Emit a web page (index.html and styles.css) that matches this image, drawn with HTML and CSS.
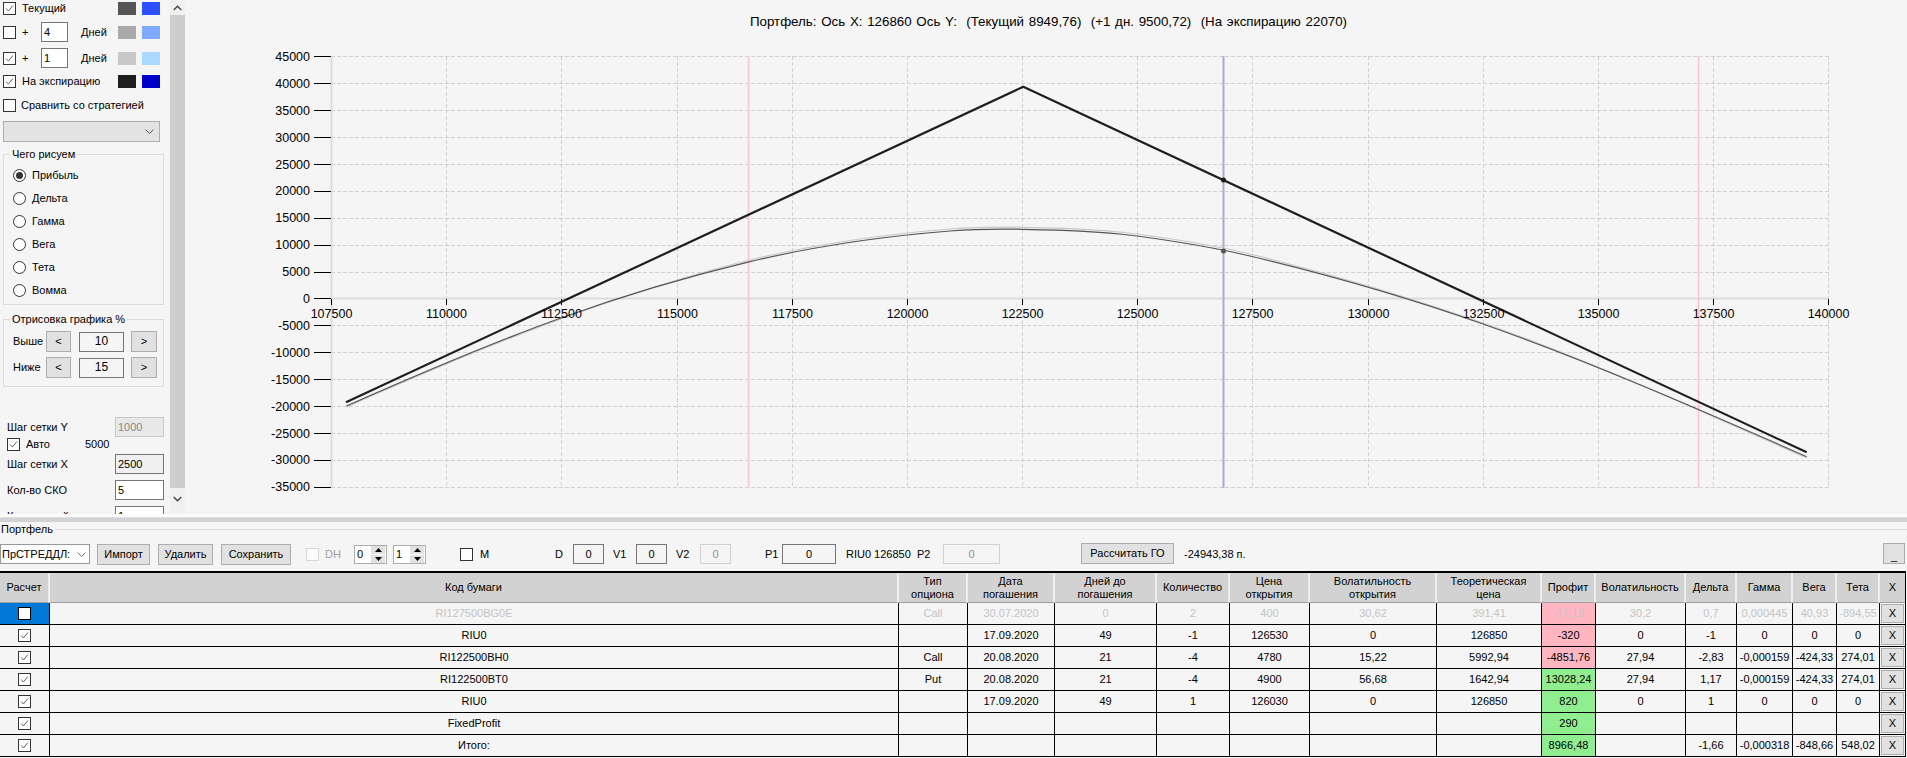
FILE: index.html
```html
<!DOCTYPE html>
<html lang="ru">
<head>
<meta charset="utf-8">
<title>Портфель</title>
<link rel="stylesheet" href="styles.css">
</head>
<body>
<svg class="defs" aria-hidden="true">
  <symbol id="tick" viewBox="0 0 13 13"><path d="M2.5 6.5 5.2 9.5 10.5 3" fill="none" stroke="#555" stroke-width="1.1"/></symbol>
</svg>
<div class="top">
  <aside class="side">
    <div class="side-in">
      <div class="row r1"><span class="cb"><svg><use href="#tick"/></svg></span><span class="lbl">Текущий</span><span class="sw s1"></span><span class="sw s2"></span></div>
      <div class="row r2"><span class="cb"></span><span class="plus">+</span><input class="inp days" value="4"><span class="dn">Дней</span><span class="sw s3"></span><span class="sw s4"></span></div>
      <div class="row r3"><span class="cb"><svg><use href="#tick"/></svg></span><span class="plus">+</span><input class="inp days" value="1"><span class="dn">Дней</span><span class="sw s5"></span><span class="sw s6"></span></div>
      <div class="row r4"><span class="cb"><svg><use href="#tick"/></svg></span><span class="lbl">На экспирацию</span><span class="sw s7"></span><span class="sw s8"></span></div>
      <div class="row r5"><span class="cb"></span><span class="lbl">Сравнить со стратегией</span></div>
      <div class="combo wide"><svg class="chev" viewBox="0 0 9 5"><path d="M.5.5 4.5 4.5 8.5.5" fill="none" stroke="#555"/></svg></div>
      <fieldset class="grp g1">
        <legend>Чего рисуем</legend>
        <div class="rad"><span class="dot on"></span>Прибыль</div>
        <div class="rad"><span class="dot"></span>Дельта</div>
        <div class="rad"><span class="dot"></span>Гамма</div>
        <div class="rad"><span class="dot"></span>Вега</div>
        <div class="rad"><span class="dot"></span>Тета</div>
        <div class="rad"><span class="dot"></span>Вомма</div>
      </fieldset>
      <fieldset class="grp g2">
        <legend>Отрисовка графика %</legend>
        <div class="pct"><span class="pl">Выше</span><span class="btn pb1">&lt;</span><span class="pv">10</span><span class="btn pb2">&gt;</span></div>
        <div class="pct pct2"><span class="pl">Ниже</span><span class="btn pb1">&lt;</span><span class="pv">15</span><span class="btn pb2">&gt;</span></div>
      </fieldset>
      <div class="set s-y"><span>Шаг сетки Y</span><input class="inp num off" value="1000"></div>
      <div class="auto"><span class="cb"><svg><use href="#tick"/></svg></span><span class="alb">Авто</span><span>5000</span></div>
      <div class="set s-x"><span>Шаг сетки X</span><input class="inp num gray" value="2500"></div>
      <div class="set s-n"><span>Кол-во СКО</span><input class="inp num" value="5"></div>
      <div class="set s-n"><span>Кол-во дней</span><input class="inp num" value="1"></div>
    </div>
    <div class="sbar">
      <div class="sbtn"><svg viewBox="0 0 9 6"><path d="M.7 5 4.5 1.2 8.3 5" fill="none" stroke="#444" stroke-width="1.4"/></svg></div>
      <div class="thumb"></div>
      <div class="sbtn sbot"><svg viewBox="0 0 9 6"><path d="M.7 1 4.5 4.8 8.3 1" fill="none" stroke="#444" stroke-width="1.4"/></svg></div>
    </div>
  </aside>
  <main class="chart">
    <div class="ctitle">Портфель: Ось X: 126860 Ось Y:&nbsp; (Текущий 8949,76)&nbsp; (+1 дн. 9500,72)&nbsp; (На экспирацию 22070)</div>
    <svg class="plot" viewBox="190 44 1717 470">
      <path class="grid" d="M331 56.5H1829M331 83.5H1829M331 110.5H1829M331 137.5H1829M331 164.5H1829M331 191.5H1829M331 218.5H1829M331 245.5H1829M331 272.5H1829M331 325.5H1829M331 352.5H1829M331 379.5H1829M331 406.5H1829M331 433.5H1829M331 460.5H1829M331 487.5H1829"/>
      <path class="grid" d="M446.5 56V488M561.5 56V488M677.5 56V488M792.5 56V488M907.5 56V488M1022.5 56V488M1137.5 56V488M1252.5 56V488M1368.5 56V488M1483.5 56V488M1598.5 56V488M1713.5 56V488M1828.5 56V488"/>
      <path class="axis" d="M331.5 56V488M331 298.5H1829"/>
      <path class="ticks" d="M314 56.5H331M314 83.5H331M314 110.5H331M314 137.5H331M314 164.5H331M314 191.5H331M314 218.5H331M314 245.5H331M314 272.5H331M314 298.5H331M314 325.5H331M314 352.5H331M314 379.5H331M314 406.5H331M314 433.5H331M314 460.5H331M314 487.5H331"/>
      <path class="ticks" d="M331.5 299V305M446.5 299V305M561.5 299V305M677.5 299V305M792.5 299V305M907.5 299V305M1022.5 299V305M1137.5 299V305M1252.5 299V305M1368.5 299V305M1483.5 299V305M1598.5 299V305M1713.5 299V305M1828.5 299V305"/>
      <path class="sd" d="M748.5 56V488M1698.5 56V488"/>
      <path class="cursor" d="M1223.5 56V488"/>
      <path class="day1" d="M346.5 407C418 375.5 489.5 344.6 561 319C624 296 687 275.5 750 260C816.7 244 883.3 234.3 950 229C974.3 227.1 998.7 226.8 1023 227.3C1061 228.1 1099 228.9 1137 234C1175.3 239.2 1213.7 245 1252 254.5C1329 273.5 1406 296 1483 323C1590.9 361 1698.8 410.5 1806.7 458"/>
      <path class="cur" d="M346.5 406C418 374.5 489.5 343.6 561 318C624 295.4 687 276.8 750 261.7C816.7 245.7 883.3 236.3 950 231C974.3 229.1 998.7 228.8 1023 229.3C1061 230.1 1099 230.9 1137 236C1175.3 241.2 1213.7 247.3 1252 256.5C1329 275 1406 296.9 1483 324C1590.9 362 1698.8 409.2 1806.7 456.7"/>
      <polyline class="exp" points="346,402.3 1023.3,86.7 1806.7,452.3"/>
      <circle class="pt1" cx="1223.5" cy="180" r="2.5"/>
      <circle class="pt2" cx="1223.5" cy="251" r="2.5"/>
      <g class="yl">
        <text x="310" y="60.5">45000</text><text x="310" y="87.5">40000</text><text x="310" y="114.5">35000</text><text x="310" y="141.5">30000</text><text x="310" y="168.5">25000</text><text x="310" y="194.5">20000</text><text x="310" y="221.5">15000</text><text x="310" y="248.5">10000</text><text x="310" y="275.5">5000</text><text x="310" y="302.5">0</text><text x="310" y="329.5">-5000</text><text x="310" y="356.5">-10000</text><text x="310" y="383.5">-15000</text><text x="310" y="410.5">-20000</text><text x="310" y="437.5">-25000</text><text x="310" y="464">-30000</text><text x="310" y="491">-35000</text>
      </g>
      <g class="xl">
        <text x="331.5" y="317.5">107500</text><text x="446.5" y="317.5">110000</text><text x="561.5" y="317.5">112500</text><text x="677.5" y="317.5">115000</text><text x="792.5" y="317.5">117500</text><text x="907.5" y="317.5">120000</text><text x="1022.5" y="317.5">122500</text><text x="1137.5" y="317.5">125000</text><text x="1252.5" y="317.5">127500</text><text x="1368.5" y="317.5">130000</text><text x="1483.5" y="317.5">132500</text><text x="1598.5" y="317.5">135000</text><text x="1713.5" y="317.5">137500</text><text x="1828.5" y="317.5">140000</text>
      </g>
    </svg>
  </main>
</div>
<div class="split"></div>
<section class="port">
  <div class="phead"><span>Портфель</span><i></i></div>
  <div class="bar">
    <div class="combo pf"><span>ПрСТРЕДДЛ:</span><svg class="chev" viewBox="0 0 9 5"><path d="M.5.5 4.5 4.5 8.5.5" fill="none" stroke="#777"/></svg></div>
    <span class="btn b-imp">Импорт</span>
    <span class="btn b-del">Удалить</span>
    <span class="btn b-sav">Сохранить</span>
    <span class="cb cb-dh"></span>
    <span class="t t-dh">DH</span>
    <div class="spin sp1"><span>0</span><div class="arr"><b><svg viewBox="0 0 7 4"><path d="M3.5 0 7 4H0z"/></svg></b><b><svg viewBox="0 0 7 4"><path d="M0 0H7L3.5 4z"/></svg></b></div></div>
    <div class="spin sp2"><span>1</span><div class="arr"><b><svg viewBox="0 0 7 4"><path d="M3.5 0 7 4H0z"/></svg></b><b><svg viewBox="0 0 7 4"><path d="M0 0H7L3.5 4z"/></svg></b></div></div>
    <span class="cb cb-m"></span>
    <span class="t t-m">M</span>
    <span class="t t-d">D</span>
    <span class="box bx-d">0</span>
    <span class="t t-v1">V1</span>
    <span class="box bx-v1">0</span>
    <span class="t t-v2">V2</span>
    <span class="box bx-v2 dis">0</span>
    <span class="t t-p1">P1</span>
    <span class="box bx-p1">0</span>
    <span class="t t-ri">RIU0 126850</span>
    <span class="t t-p2">P2</span>
    <span class="box bx-p2 dis">0</span>
    <span class="btn b-go">Рассчитать ГО</span>
    <span class="t t-go">-24943,38 п.</span>
    <span class="btn b-min">_</span>
  </div>
  <table class="grid-t">
    <colgroup><col class="c1"><col class="c2"><col class="c3"><col class="c4"><col class="c5"><col class="c6"><col class="c7"><col class="c8"><col class="c9"><col class="c10"><col class="c11"><col class="c12"><col class="c13"><col class="c14"><col class="c15"><col class="c16"></colgroup>
    <thead>
      <tr><th>Расчет</th><th>Код бумаги</th><th>Тип<br>опциона</th><th>Дата<br>погашения</th><th>Дней до<br>погашения</th><th>Количество</th><th>Цена<br>открытия</th><th>Волатильность<br>открытия</th><th>Теоретическая<br>цена</th><th>Профит</th><th>Волатильность</th><th>Дельта</th><th>Гамма</th><th>Вега</th><th>Тета</th><th>X</th></tr>
    </thead>
    <tbody>
      <tr class="dim"><td class="sel"><span class="cb wh"></span></td><td>RI127500BG0E</td><td>Call</td><td>30.07.2020</td><td>0</td><td>2</td><td>400</td><td>30,62</td><td>391,41</td><td class="loss">-17,18</td><td>30,2</td><td>0,7</td><td>0,000445</td><td>40,93</td><td>-894,55</td><td class="xc"><span class="xb">X</span></td></tr>
      <tr><td><span class="cb"><svg><use href="#tick"/></svg></span></td><td>RIU0</td><td></td><td>17.09.2020</td><td>49</td><td>-1</td><td>126530</td><td>0</td><td>126850</td><td class="loss">-320</td><td>0</td><td>-1</td><td>0</td><td>0</td><td>0</td><td class="xc"><span class="xb">X</span></td></tr>
      <tr><td><span class="cb"><svg><use href="#tick"/></svg></span></td><td>RI122500BH0</td><td>Call</td><td>20.08.2020</td><td>21</td><td>-4</td><td>4780</td><td>15,22</td><td>5992,94</td><td class="loss">-4851,76</td><td>27,94</td><td>-2,83</td><td>-0,000159</td><td>-424,33</td><td>274,01</td><td class="xc"><span class="xb">X</span></td></tr>
      <tr><td><span class="cb"><svg><use href="#tick"/></svg></span></td><td>RI122500BT0</td><td>Put</td><td>20.08.2020</td><td>21</td><td>-4</td><td>4900</td><td>56,68</td><td>1642,94</td><td class="gain">13028,24</td><td>27,94</td><td>1,17</td><td>-0,000159</td><td>-424,33</td><td>274,01</td><td class="xc"><span class="xb">X</span></td></tr>
      <tr><td><span class="cb"><svg><use href="#tick"/></svg></span></td><td>RIU0</td><td></td><td>17.09.2020</td><td>49</td><td>1</td><td>126030</td><td>0</td><td>126850</td><td class="gain">820</td><td>0</td><td>1</td><td>0</td><td>0</td><td>0</td><td class="xc"><span class="xb">X</span></td></tr>
      <tr><td><span class="cb"><svg><use href="#tick"/></svg></span></td><td>FixedProfit</td><td></td><td></td><td></td><td></td><td></td><td></td><td></td><td class="gain">290</td><td></td><td></td><td></td><td></td><td></td><td class="xc"><span class="xb">X</span></td></tr>
      <tr><td><span class="cb"><svg><use href="#tick"/></svg></span></td><td>Итого:</td><td></td><td></td><td></td><td></td><td></td><td></td><td></td><td class="gain">8966,48</td><td></td><td>-1,66</td><td>-0,000318</td><td>-848,66</td><td>548,02</td><td class="xc"><span class="xb">X</span></td></tr>
    </tbody>
  </table>
</section>
</body>
</html>
```
FILE: styles.css
```css
*{box-sizing:border-box}
html,body{margin:0;height:758px;overflow:hidden}
body{background:#f5f5f5;color:#000;font:11px/13px "Liberation Sans",Arial,sans-serif}
.defs{display:none}

/* top area */
.top{display:flex;height:514px}
.side{display:flex;width:190px;height:514px;overflow:hidden;flex:none}
.side-in{width:170px;flex:none}
.sbar{width:15px;flex:none;display:flex;flex-direction:column;background:#f0f0f0}
.sbtn{height:15px;display:flex;align-items:center;justify-content:center}
.sbtn svg{width:9px;height:6px}
.thumb{height:473px;background:#cdcdcd}
.sbot{margin-top:auto;height:26px;padding-top:8px;align-items:flex-start}

.row{display:flex;align-items:center;width:160px;padding-left:3px}
.r1{height:17px}
.r2{height:20px;margin-top:5px}
.r3{height:20px;margin-top:6px}
.r4{height:14px;margin-top:6px}
.r5{height:13px;margin-top:11px}
.cb{display:block;flex:none;width:13px;height:13px;border:1px solid #333;background:#fff}
.cb svg{display:block;width:11px;height:11px}
.lbl{margin-left:6px;white-space:nowrap}
.r5 .lbl{margin-left:5px}
.plus{margin-left:6px;width:19px}
.inp{font:inherit;color:#000;border:1px solid #767676;background:#fff;padding:0 2px;margin:0;border-radius:0;outline:0;display:block}
.days{width:27px;height:20px}
.dn{margin-left:13px}
.sw{width:18px;height:13px;flex:none}
.sw:nth-last-child(2){margin-left:auto}
.sw:last-child{margin-left:6px}
.s1{background:#555}.s2{background:#2b50ff}.s3{background:#a9a9a9}.s4{background:#7faaff}
.s5{background:#c8c8c8}.s6{background:#aad8ff}.s7{background:#1e1e1e}.s8{background:#0000c8}

.combo{background:#e3e3e3;border:1px solid #adadad;display:flex;align-items:center;justify-content:flex-end}
.wide{width:157px;height:21px;margin:9px 0 0 3px;padding-right:5px}
.chev{width:9px;height:5px;flex:none}

.grp{margin:0 0 0 3px;padding:0;border:1px solid #dcdcdc;width:161px}
.grp legend{padding:0 2px;margin-left:-3px}
.g1{height:157px;margin-top:6px;padding:3px 0 0 9px}
.g2{height:74px;margin-top:8px;padding:5px 0 0 9px}
.rad{display:flex;align-items:center;height:23px;gap:6px}
.dot{width:13px;height:13px;border-radius:50%;border:1px solid #333;background:#fff;display:flex;align-items:center;justify-content:center}
.dot.on::after{content:"";width:7px;height:7px;border-radius:50%;background:#333}
.pct{display:flex;align-items:center;height:21px}
.pct2{margin-top:5px}
.pl{width:33px}
.btn{background:#e1e1e1;border:1px solid #adadad;display:flex;align-items:center;justify-content:center;flex:none;white-space:nowrap}
.pb1{width:25px;height:21px}
.pb2{width:26px;height:21px;margin-left:7px}
.pv{width:45px;height:20px;margin-left:8px;border:1px solid #767676;display:flex;align-items:center;justify-content:center;font-size:12px}

.set{display:flex;align-items:center;justify-content:space-between;width:164px;padding-left:7px;height:20px}
.s-y{margin-top:30px}
.s-x{margin-top:3px}
.s-n{margin-top:6px}
.num{width:49px;height:20px}
.off{background:#e8e8e8;color:#888;border-color:#c8c8c8}
.gray{background:#f0f0f0}
.auto{display:flex;align-items:center;padding-left:7px;height:13px;margin-top:1px}
.alb{width:59px;margin-left:6px}

/* chart */
.chart{flex:1;min-width:0}
.ctitle{height:44px;padding-top:15px;text-align:center;font-size:13.33px;word-spacing:1px;line-height:14px;white-space:nowrap}
.plot{display:block;width:1717px;height:470px}
.plot path,.plot polyline{fill:none}
.grid{stroke:#d2d2d2;stroke-dasharray:4 2}
.axis{stroke:#dcdcdc;stroke-width:2}
.ticks{stroke:#000}
.sd{stroke:#ffc0cb;stroke-width:1.4}
.cursor{stroke:#a9afbc;stroke-width:2}
.day1{stroke:#c8c8c8;stroke-width:1.2}
.cur{stroke:#555;stroke-width:1.2}
.exp{stroke:#1e1e1e;stroke-width:2.2;stroke-linejoin:round}
.pt1{fill:#1e1e1e}
.pt2{fill:#555}
.plot text{font-size:12.5px;fill:#000}
.yl text{text-anchor:end}
.xl text{text-anchor:middle}

/* splitter + portfolio */
.split{height:8px;border-top:3px solid #fbfbfb;border-bottom:4px solid #d2d2d2;background:#e0e0e0}
.port{padding-top:1px}
.phead{display:flex;align-items:center;height:13px;padding-left:1px}
.phead i{flex:1;height:1px;background:#dcdcdc;margin-left:2px}
.bar{display:flex;align-items:center;height:22px;margin-top:7px}
.pf{width:90px;height:20px;background:#fff;border-color:#999;justify-content:space-between;padding:0 3px 0 1px}
.pf span{white-space:nowrap;overflow:hidden;width:72px}
.t{flex:none;white-space:nowrap}
.b-imp{width:53px;height:21px;margin-left:7px}
.b-del{width:55px;height:21px;margin-left:8px}
.b-sav{width:70px;height:21px;margin-left:8px}
.cb-dh{margin-left:15px;background:#fbfbfb;border-color:#d8d8d8}
.t-dh{width:14px;margin-left:6px;color:#a0a0a0}
.spin{height:19px;border:1px solid #adadad;background:#fff;display:flex;justify-content:space-between;align-items:center;padding-left:2px;flex:none;width:33px}
.sp1{margin-left:15px}
.sp2{margin-left:6px}
.arr{display:flex;flex-direction:column;width:14px;height:17px;gap:1px;margin-right:1px}
.arr b{flex:1;background:#e1e1e1;display:flex;align-items:center;justify-content:center}
.arr svg{width:7px;height:4px}
.cb-m{margin-left:34px}
.t-m{width:9px;margin-left:7px}
.t-d{width:8px;margin-left:66px}
.box{height:20px;border:1px solid #767676;flex:none;display:flex;align-items:center;justify-content:center;background:#f5f5f5}
.dis{border-color:#d0d0d0;color:#909090}
.bx-d{width:31px;margin-left:10px}
.t-v1{width:14px;margin-left:9px}
.bx-v1{width:31px;margin-left:9px}
.t-v2{width:14px;margin-left:9px}
.bx-v2{width:31px;margin-left:10px}
.t-p1{width:14px;margin-left:34px}
.bx-p1{width:54px;margin-left:3px}
.t-ri{width:63px;margin-left:10px}
.t-p2{width:14px;margin-left:8px}
.bx-p2{width:57px;margin-left:12px}
.b-go{width:93px;height:21px;margin-left:81px;margin-top:-2px}
.t-go{width:60px;margin-left:10px}
.b-min{width:22px;height:21px;margin-left:639px;margin-top:-2px;align-items:flex-end}

/* table */
.grid-t{table-layout:fixed;width:1905px;margin-top:6px;border-collapse:separate;border-spacing:0;border-top:2px solid #000;border-right:1px solid #000}
.c1{width:50px}.c2{width:849px}.c3{width:69px}.c4{width:87px}.c5{width:102px}.c6{width:73px}.c7{width:80px}.c8{width:127px}
.c9{width:105px}.c10{width:54px}.c11{width:90px}.c12{width:51px}.c13{width:56px}.c14{width:44px}.c15{width:43px}.c16{width:25px}
.grid-t th{height:30px;background:#d2d2d2;font-weight:400;padding:0;border-right:2px solid #eee;border-bottom:1px solid #a0a0a0;text-align:center;vertical-align:middle}
.grid-t td{height:22px;padding:0;text-align:center;vertical-align:middle;border-right:1px solid #000;border-bottom:1px solid #000;white-space:nowrap}
.grid-t td:last-child,.grid-t th:last-child{border-right:0}
.grid-t td .cb{margin:0 auto}
.dim td{color:#c4c4c4}
.grid-t .sel{background:#0078d7}
.wh{border-color:#000}
.grid-t .loss{background:#ffb6c1}
.grid-t .gain{background:#90ee90}
.xc{padding:1px}
.xb{display:block;height:19px;line-height:17px;margin:0 1px;background:#e1e1e1;border:1px solid #adadad;color:#000}
```
